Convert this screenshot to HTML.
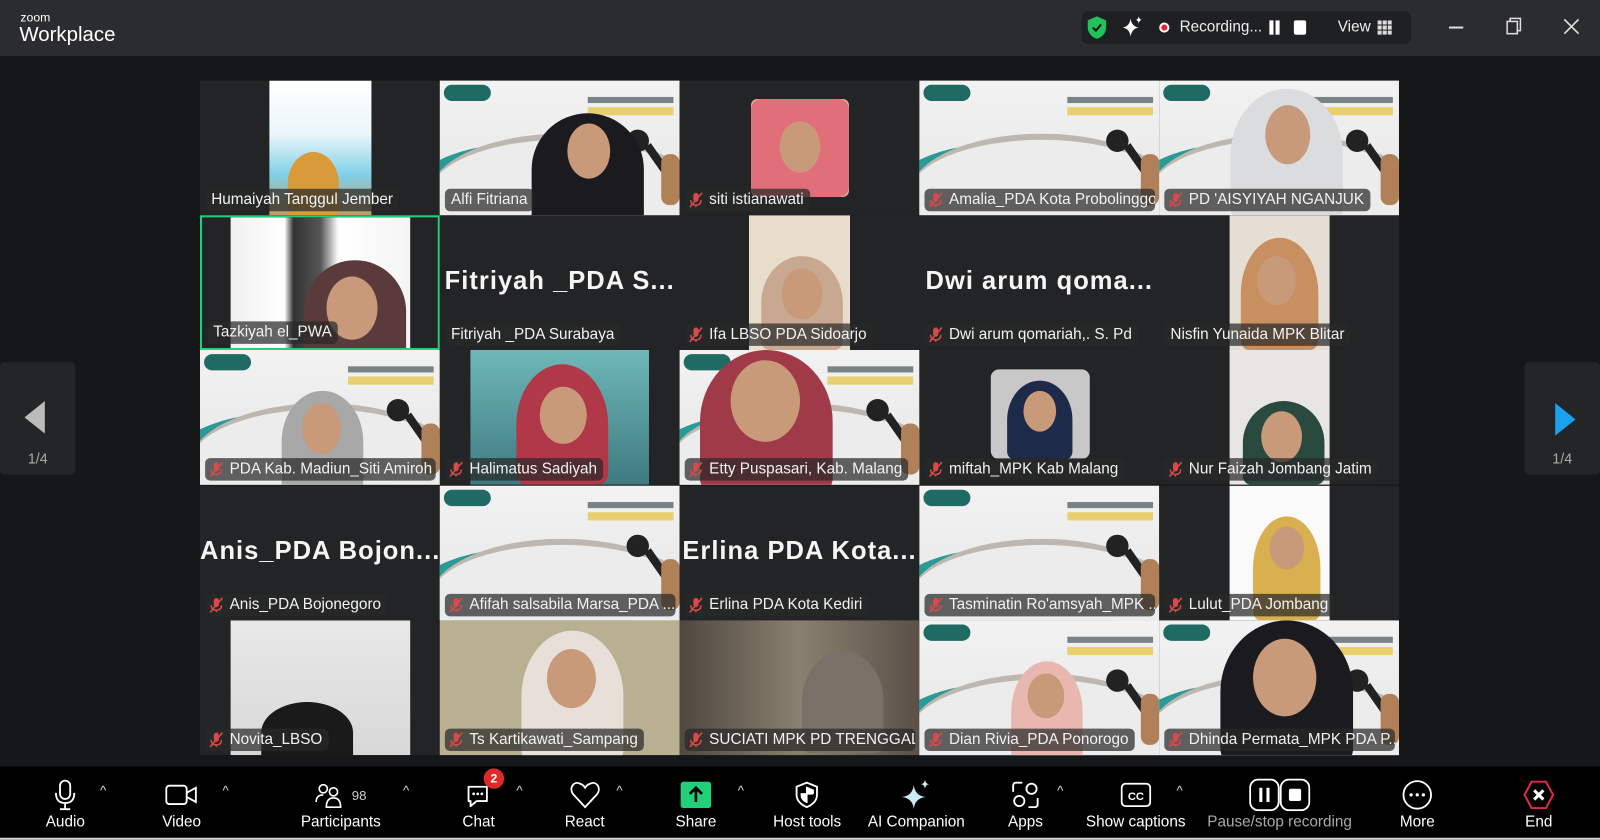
<!DOCTYPE html>
<html><head><meta charset="utf-8"><style>
*{margin:0;padding:0;box-sizing:border-box}
body{width:1600px;height:840px;background:#161718;font-family:"Liberation Sans",sans-serif;position:relative;overflow:hidden;color:#fff}
#w{position:absolute;left:0;top:0;width:1568px;height:823px;transform:scale(1.020408);transform-origin:0 0}
.top{position:absolute;left:0;top:0;width:1568px;height:55px;background:#2b2c2e}
.t{position:absolute;width:235px;height:132px;overflow:hidden;background:#232425}
.lbl{position:absolute;left:5px;bottom:4px;height:22px;background:rgba(40,40,40,.72);border-radius:5px;padding:0 6px 0 4px;font-size:15px;line-height:22px;color:#f2f2f2;white-space:nowrap;display:flex;align-items:center;max-width:226px;overflow:hidden}
.mic{width:14px;height:16px;margin-right:6px;flex:none}
.big{position:absolute;left:0;right:0;top:50px;text-align:center;font-weight:bold;font-size:25px;letter-spacing:1px;color:#f5f5f5;white-space:nowrap}
.ban{background:linear-gradient(180deg,#f2f2f2,#e6e6e6)}
.ban .teal{position:absolute;left:-40px;bottom:-60px;width:230px;height:130px;border-radius:50%;background:#2a9a96}
.ban .wh{position:absolute;left:-10px;bottom:-40px;width:260px;height:120px;border-radius:50%;background:#ececec;border-top:6px solid #bdb7b0}
.ban .logo{position:absolute;left:4px;top:4px;width:46px;height:16px;border-radius:8px;background:#1f6a63}
.ban .ttl{position:absolute;right:6px;top:16px;width:84px;height:6px;background:#2a3a40;opacity:.6}
.ban .ttl2{position:absolute;right:6px;top:26px;width:84px;height:8px;background:#e8d070}
.ban .mk{position:absolute;right:30px;top:48px;width:22px;height:22px;border-radius:50%;background:#222}
.ban .mh{position:absolute;right:16px;top:60px;width:8px;height:40px;background:#222;transform:rotate(-35deg)}
.ban .hand{position:absolute;right:0;top:72px;width:18px;height:50px;background:#b08058;border-radius:8px}
.vid{position:absolute;top:0;height:132px}
.side{position:absolute;top:355px;width:74px;height:110px;background:#242526;border-radius:4px;text-align:center;font-size:14px;color:#aaa}
.tb{position:absolute;left:0;top:751px;width:1568px;height:70px;background:#000}
.tbi{position:absolute;top:8px;text-align:center;font-size:15px;color:#fff;transform:translateX(-50%);white-space:nowrap}
.tbi .ic{height:40px;display:flex;align-items:center;justify-content:center}
.tbi .tx{margin-top:-2px}
.car{position:absolute;top:16px;font-size:13px;color:#ddd}
.hj{position:absolute;border-radius:50% 50% 10% 10%}
.face{position:absolute;border-radius:50%;background:#c89a7a}
</style></head><body><div id="w">
<div class="top">
<div style="position:absolute;left:20px;top:11px;font-size:12px;color:#fff;line-height:12px">zoom</div>
<div style="position:absolute;left:19px;top:23px;font-size:20px;color:#fff">Workplace</div>
<div style="position:absolute;left:1060px;top:11px;width:323px;height:32px;background:#1f2022;border-radius:6px"></div>
<svg style="position:absolute;left:1065px;top:15px" width="20" height="24"><path d="M10 1 L19 5 V12 C19 18 14 22 10 23 C6 22 1 18 1 12 V5 Z" fill="#22c25a"/><path d="M6 12 L9 15 L14 9" stroke="#111" stroke-width="2" fill="none"/></svg>
<svg style="position:absolute;left:1099px;top:15px" width="22" height="22"><path d="M9 3 Q10 11 17 12 Q10 13 9 21 Q8 13 1 12 Q8 11 9 3Z" fill="#fff"/><path d="M17 1 Q17.5 4 20 4.5 Q17.5 5 17 8 Q16.5 5 14 4.5 Q16.5 4 17 1Z" fill="#fff"/></svg>
<div style="position:absolute;left:1136px;top:22px;width:10px;height:10px;border-radius:50%;background:#e23;border:2px solid #fff"></div>
<div style="position:absolute;left:1156px;top:18px;font-size:15px;color:#eee">Recording...</div>
<div style="position:absolute;left:1244px;top:20px;width:4px;height:14px;background:#fff"></div><div style="position:absolute;left:1250px;top:20px;width:4px;height:14px;background:#fff"></div>
<div style="position:absolute;left:1268px;top:20px;width:12px;height:14px;background:#fff;border-radius:2px"></div>
<div style="position:absolute;left:1311px;top:18px;font-size:15px;color:#eee">View</div>
<svg style="position:absolute;left:1350px;top:20px" width="14" height="14"><g fill="#ddd"><rect x="0" y="0" width="4" height="4"/><rect x="5" y="0" width="4" height="4"/><rect x="10" y="0" width="4" height="4"/><rect x="0" y="5" width="4" height="4"/><rect x="5" y="5" width="4" height="4"/><rect x="10" y="5" width="4" height="4"/><rect x="0" y="10" width="4" height="4"/><rect x="5" y="10" width="4" height="4"/><rect x="10" y="10" width="4" height="4"/></g></svg>
<div style="position:absolute;left:1420px;top:26px;width:14px;height:1.5px;background:#ddd"></div>
<svg style="position:absolute;left:1476px;top:17px" width="16" height="18"><rect x="1" y="4" width="10" height="12" fill="none" stroke="#ddd" stroke-width="1.5"/><path d="M4 4 V1 H14 V13 H11" fill="none" stroke="#ddd" stroke-width="1.5"/></svg>
<svg style="position:absolute;left:1532px;top:18px" width="16" height="16"><path d="M1 1 L15 15 M15 1 L1 15" stroke="#ddd" stroke-width="1.6"/></svg>
</div>

<div class="side" style="left:0"><svg style="position:absolute;left:24px;top:38px" width="20" height="32"><path d="M20 0 V32 L0 16Z" fill="#bbb"/></svg><div style="position:absolute;left:0;right:0;top:86px">1/4</div></div>
<div class="side" style="left:1494px"><svg style="position:absolute;left:30px;top:40px" width="20" height="32"><path d="M0 0 V32 L20 16Z" fill="#19a1f0"/></svg><div style="position:absolute;left:0;right:0;top:86px">1/4</div></div>

<div class="t" style="left:196px;top:79px"><div class="vid" style="left:68px;width:100px;background:linear-gradient(180deg,#fff 0%,#eaf6fa 40%,#7fd0e8 70%,#c89a60 100%)"></div><div class="hj" style="left:86px;top:70px;width:50px;height:62px;background:#d99a3a"></div><div class="lbl" style="padding-left:6px">Humaiyah Tanggul Jember</div></div>
<div class="t ban" style="left:431px;top:79px"><div class="teal"></div><div class="wh"></div><div class="logo"></div><div class="ttl"></div><div class="ttl2"></div><div class="mk"></div><div class="mh"></div><div class="hand"></div><div class="hj" style="left:90px;top:32px;width:110px;height:110px;background:#1b1b1f"></div><div class="face" style="left:125px;top:42px;width:42px;height:54px"></div><div class="lbl" style="padding-left:6px">Alfi Fitriana</div></div>
<div class="t" style="left:666px;top:79px"><div class="vid" style="left:70px;width:96px;top:18px;height:96px;background:#d8b890;border-radius:6px"></div><div class="hj" style="left:70px;top:18px;width:96px;height:96px;background:#e06f7a;border-radius:10px"></div><div class="face" style="left:98px;top:40px;width:40px;height:50px"></div><div class="lbl">MIC siti istianawati</div></div>
<div class="t ban" style="left:901px;top:79px"><div class="teal"></div><div class="wh"></div><div class="logo"></div><div class="ttl"></div><div class="ttl2"></div><div class="mk"></div><div class="mh"></div><div class="hand"></div><div class="lbl">MIC Amalia_PDA Kota Probolinggo</div></div>
<div class="t ban" style="left:1136px;top:79px"><div class="teal"></div><div class="wh"></div><div class="logo"></div><div class="ttl"></div><div class="ttl2"></div><div class="mk"></div><div class="mh"></div><div class="hand"></div><div class="hj" style="left:70px;top:8px;width:110px;height:130px;background:#dadcde"></div><div class="face" style="left:104px;top:24px;width:44px;height:58px"></div><div class="lbl">MIC PD 'AISYIYAH NGANJUK</div></div>

<div class="t" style="left:196px;top:211px;border:2px solid #22d07a"><div class="vid" style="left:28px;width:176px;background:linear-gradient(90deg,#f0f0f0,#fff 30%,#333 35%,#555 50%,#fff 60%,#f4f4f4)"></div><div class="hj" style="left:100px;top:42px;width:100px;height:100px;background:#5a3a3a"></div><div class="face" style="left:122px;top:58px;width:50px;height:62px"></div><div class="lbl" style="padding-left:6px">Tazkiyah el_PWA</div></div>
<div class="t" style="left:431px;top:211px"><div class="big">Fitriyah _PDA S...</div><div class="lbl" style="padding-left:6px">Fitriyah _PDA Surabaya</div></div>
<div class="t" style="left:666px;top:211px"><div class="vid" style="left:68px;width:99px;background:#e8dccb"></div><div class="hj" style="left:80px;top:40px;width:80px;height:92px;background:#c8a890"></div><div class="face" style="left:100px;top:52px;width:40px;height:50px"></div><div class="lbl">MIC Ifa LBSO PDA Sidoarjo</div></div>
<div class="t" style="left:901px;top:211px"><div class="big">Dwi arum qoma...</div><div class="lbl">MIC Dwi arum qomariah,. S. Pd</div></div>
<div class="t" style="left:1136px;top:211px"><div class="vid" style="left:69px;width:98px;background:#e4ded4"></div><div class="hj" style="left:80px;top:22px;width:76px;height:110px;background:#c89060"></div><div class="face" style="left:96px;top:40px;width:38px;height:48px"></div><div class="lbl" style="padding-left:6px">Nisfin Yunaida MPK Blitar</div></div>

<div class="t ban" style="left:196px;top:343px"><div class="teal"></div><div class="wh"></div><div class="logo"></div><div class="ttl"></div><div class="ttl2"></div><div class="mk"></div><div class="mh"></div><div class="hand"></div><div class="hj" style="left:80px;top:40px;width:80px;height:100px;background:#a8a8a8"></div><div class="face" style="left:100px;top:52px;width:38px;height:50px"></div><div class="lbl">MIC PDA Kab. Madiun_Siti Amiroh</div></div>
<div class="t" style="left:431px;top:343px"><div class="vid" style="left:30px;width:175px;background:linear-gradient(180deg,#6fb8b8,#3e7a80)"></div><div class="hj" style="left:75px;top:14px;width:90px;height:118px;background:#b03848"></div><div class="face" style="left:98px;top:36px;width:46px;height:56px"></div><div class="lbl">MIC Halimatus Sadiyah</div></div>
<div class="t ban" style="left:666px;top:343px"><div class="teal"></div><div class="wh"></div><div class="logo"></div><div class="ttl"></div><div class="ttl2"></div><div class="mk"></div><div class="mh"></div><div class="hand"></div><div class="hj" style="left:20px;top:0;width:130px;height:140px;background:#a03a48"></div><div class="face" style="left:50px;top:10px;width:68px;height:80px"></div><div class="lbl">MIC Etty Puspasari, Kab. Malang</div></div>
<div class="t" style="left:901px;top:343px"><div class="vid" style="left:70px;width:97px;top:19px;height:88px;background:#c8c8c8;border-radius:8px"></div><div class="hj" style="left:86px;top:30px;width:64px;height:77px;background:#1e2a4a"></div><div class="face" style="left:102px;top:40px;width:32px;height:40px"></div><div class="lbl">MIC miftah_MPK Kab Malang</div></div>
<div class="t" style="left:1136px;top:343px"><div class="vid" style="left:69px;width:98px;background:#e8e6e2"></div><div class="hj" style="left:82px;top:50px;width:80px;height:82px;background:#2a4a40"></div><div class="face" style="left:100px;top:60px;width:40px;height:50px"></div><div class="lbl">MIC Nur Faizah  Jombang Jatim</div></div>

<div class="t" style="left:196px;top:476px"><div class="big">Anis_PDA Bojon...</div><div class="lbl">MIC Anis_PDA Bojonegoro</div></div>
<div class="t ban" style="left:431px;top:476px"><div class="teal"></div><div class="wh"></div><div class="logo"></div><div class="ttl"></div><div class="ttl2"></div><div class="mk"></div><div class="mh"></div><div class="hand"></div><div class="lbl">MIC Afifah salsabila Marsa_PDA ...</div></div>
<div class="t" style="left:666px;top:476px"><div class="big">Erlina PDA Kota...</div><div class="lbl">MIC Erlina PDA Kota Kediri</div></div>
<div class="t ban" style="left:901px;top:476px"><div class="teal"></div><div class="wh"></div><div class="logo"></div><div class="ttl"></div><div class="ttl2"></div><div class="mk"></div><div class="mh"></div><div class="hand"></div><div class="lbl">MIC Tasminatin Ro'amsyah_MPK ...</div></div>
<div class="t" style="left:1136px;top:476px"><div class="vid" style="left:69px;width:98px;background:#fafafa"></div><div class="hj" style="left:92px;top:30px;width:66px;height:102px;background:#d8b050"></div><div class="face" style="left:108px;top:40px;width:34px;height:42px"></div><div class="lbl">MIC Lulut_PDA Jombang</div></div>

<div class="t" style="left:196px;top:608px"><div class="vid" style="left:30px;width:176px;background:linear-gradient(180deg,#e8e8e8,#d8d8d8)"></div><div class="hj" style="left:60px;top:80px;width:90px;height:60px;background:#1a1a1a"></div><div class="lbl">MIC Novita_LBSO</div></div>
<div class="t" style="left:431px;top:608px;background:#b8b090"><div class="hj" style="left:80px;top:10px;width:100px;height:130px;background:#e8e0d8"></div><div class="face" style="left:105px;top:28px;width:48px;height:58px"></div><div class="lbl">MIC Ts Kartikawati_Sampang</div></div>
<div class="t" style="left:666px;top:608px;background:linear-gradient(90deg,#504840,#8a8070 50%,#5a5048)"><div class="hj" style="left:120px;top:30px;width:80px;height:100px;background:#7a7068"></div><div class="lbl">MIC SUCIATI MPK PD TRENGGAL...</div></div>
<div class="t ban" style="left:901px;top:608px"><div class="teal"></div><div class="wh"></div><div class="logo"></div><div class="ttl"></div><div class="ttl2"></div><div class="mk"></div><div class="mh"></div><div class="hand"></div><div class="hj" style="left:90px;top:40px;width:70px;height:100px;background:#e8b8b0"></div><div class="face" style="left:106px;top:52px;width:36px;height:44px"></div><div class="lbl">MIC Dian Rivia_PDA Ponorogo</div></div>
<div class="t ban" style="left:1136px;top:608px"><div class="teal"></div><div class="wh"></div><div class="logo"></div><div class="ttl"></div><div class="ttl2"></div><div class="mk"></div><div class="mh"></div><div class="hand"></div><div class="hj" style="left:60px;top:0;width:130px;height:140px;background:#1b1b1f"></div><div class="face" style="left:92px;top:18px;width:62px;height:76px"></div><div class="lbl">MIC Dhinda Permata_MPK PDA P...</div></div>

<div class="tb">
<div class="tbi" style="left:64px"><div class="ic"><svg width="24" height="32"><rect x="7" y="2" width="10" height="18" rx="5" fill="none" stroke="#fff" stroke-width="1.8"/><path d="M3 14 Q3 24 12 24 Q21 24 21 14 M12 24 V30 M7 30 H17" fill="none" stroke="#fff" stroke-width="1.8"/></svg></div><div class="tx">Audio</div></div>
<div class="car" style="left:98px">^</div>
<div class="tbi" style="left:178px"><div class="ic"><svg width="32" height="22"><rect x="1" y="2" width="20" height="18" rx="3" fill="none" stroke="#fff" stroke-width="1.8"/><path d="M21 9 L30 4 V18 L21 13" fill="none" stroke="#fff" stroke-width="1.8"/></svg></div><div class="tx">Video</div></div>
<div class="car" style="left:218px">^</div>
<div class="tbi" style="left:334px"><div class="ic"><svg width="26" height="26"><circle cx="8" cy="7" r="4" fill="none" stroke="#fff" stroke-width="1.6"/><circle cx="18" cy="10" r="4" fill="none" stroke="#fff" stroke-width="1.6"/><path d="M1 20 Q1 13 8 13 M11 25 Q11 16 18 16 Q25 16 25 25Z" fill="none" stroke="#fff" stroke-width="1.6"/></svg><span style="font-size:13px;color:#ccc;margin-left:10px">98</span></div><div class="tx">Participants</div></div>
<div class="car" style="left:395px">^</div>
<div class="tbi" style="left:469px"><div class="ic"><svg width="28" height="28"><path d="M4 6 H22 V20 H12 L6 25 V20 H4Z" fill="none" stroke="#fff" stroke-width="1.8" stroke-linejoin="round"/><circle cx="9" cy="13" r="1.3" fill="#fff"/><circle cx="13" cy="13" r="1.3" fill="#fff"/><circle cx="17" cy="13" r="1.3" fill="#fff"/></svg></div><div class="tx">Chat</div></div>
<div style="position:absolute;left:474px;top:2px;width:20px;height:20px;border-radius:50%;background:#e02a2a;color:#fff;font-size:12px;font-weight:bold;text-align:center;line-height:20px">2</div>
<div class="car" style="left:506px">^</div>
<div class="tbi" style="left:573px"><div class="ic"><svg width="30" height="28"><path d="M15 26 L3 13 C-1 7 4 0 10 3 Q13 4 15 7 Q17 4 20 3 C26 0 31 7 27 13Z" fill="none" stroke="#fff" stroke-width="1.8"/></svg></div><div class="tx">React</div></div>
<div class="car" style="left:604px">^</div>
<div class="tbi" style="left:682px"><div class="ic"><svg width="30" height="26"><rect x="0" y="0" width="30" height="26" rx="3" fill="#22d07a"/><path d="M15 20 V7 M9 12 L15 6 L21 12" stroke="#000" stroke-width="2.6" fill="none"/></svg></div><div class="tx">Share</div></div>
<div class="car" style="left:723px">^</div>
<div class="tbi" style="left:791px"><div class="ic"><svg width="24" height="28"><path d="M12 2 L22 6 V14 C22 20 17 24 12 26 C7 24 2 20 2 14 V6Z" fill="none" stroke="#fff" stroke-width="1.8"/><path d="M12 6 V22 M6 13 H18" stroke="#fff" stroke-width="1.5"/><path d="M12 6 L19 9 V13 H12Z M12 13 H6 V15 C6 18 9 21 12 22Z" fill="#fff"/></svg></div><div class="tx">Host tools</div></div>
<div class="tbi" style="left:898px"><div class="ic"><svg width="30" height="30"><path d="M12 5 Q13 16 24 17 Q13 18 12 29 Q11 18 0 17 Q11 16 12 5Z" fill="#c9ecf7"/><path d="M23 0 Q23.6 4 27 4.5 Q23.6 5 23 9 Q22.4 5 19 4.5 Q22.4 4 23 0Z" fill="#c9ecf7"/></svg></div><div class="tx">AI Companion</div></div>
<div class="tbi" style="left:1005px"><div class="ic"><svg width="28" height="28"><path d="M2 11 V5 Q2 2 5 2 H11 M26 17 V23 Q26 26 23 26 H17" fill="none" stroke="#fff" stroke-width="1.8"/><circle cx="20" cy="8" r="5" fill="none" stroke="#fff" stroke-width="1.8"/><circle cx="8" cy="20" r="5" fill="none" stroke="#fff" stroke-width="1.8"/></svg></div><div class="tx">Apps</div></div>
<div class="car" style="left:1036px">^</div>
<div class="tbi" style="left:1113px"><div class="ic"><svg width="30" height="24"><rect x="1" y="1" width="28" height="22" rx="4" fill="none" stroke="#fff" stroke-width="1.8"/><text x="15" y="17" text-anchor="middle" font-family="Liberation Sans" font-size="11" font-weight="bold" fill="#fff">CC</text></svg></div><div class="tx">Show captions</div></div>
<div class="car" style="left:1153px">^</div>
<div class="tbi" style="left:1254px;color:#aaa"><div class="ic"><svg width="60" height="32"><rect x="1" y="1" width="28" height="30" rx="8" fill="none" stroke="#fff" stroke-width="1.8"/><rect x="10" y="9" width="3" height="14" fill="#fff"/><rect x="17" y="9" width="3" height="14" fill="#fff"/><rect x="31" y="1" width="28" height="30" rx="8" fill="none" stroke="#fff" stroke-width="1.8"/><rect x="39" y="10" width="12" height="12" rx="2" fill="#fff"/></svg></div><div class="tx">Pause/stop recording</div></div>
<div class="tbi" style="left:1389px"><div class="ic"><svg width="30" height="30"><circle cx="15" cy="15" r="13.5" fill="none" stroke="#fff" stroke-width="1.8"/><circle cx="9" cy="15" r="1.6" fill="#fff"/><circle cx="15" cy="15" r="1.6" fill="#fff"/><circle cx="21" cy="15" r="1.6" fill="#fff"/></svg></div><div class="tx">More</div></div>
<div class="tbi" style="left:1508px"><div class="ic"><svg width="30" height="28"><path d="M8 1 H22 L29 14 L22 27 H8 L1 14Z" fill="none" stroke="#e0284a" stroke-width="2"/><path d="M10.5 9.5 L19.5 18.5 M19.5 9.5 L10.5 18.5" stroke="#fff" stroke-width="3"/></svg></div><div class="tx">End</div></div>
</div>
<div style="position:absolute;left:0;top:821px;width:1568px;height:2px;background:#d8d8d8"></div>
</div>
<script>
document.querySelectorAll('.lbl').forEach(function(l){
 if(l.firstChild && l.firstChild.nodeType===3 && l.firstChild.nodeValue.indexOf('MIC ')===0){
  l.firstChild.nodeValue=l.firstChild.nodeValue.slice(4);
  var s=document.createElementNS('http://www.w3.org/2000/svg','svg');
  s.setAttribute('class','mic');s.setAttribute('viewBox','0 0 14 16');
  s.innerHTML='<rect x="4.5" y="1" width="5" height="9" rx="2.5" fill="#d84a4a"/><path d="M2 8 Q2 13 7 13 Q12 13 12 8 M7 13 V15" stroke="#d84a4a" stroke-width="1.4" fill="none"/><path d="M1 15 L13 1" stroke="#d84a4a" stroke-width="1.6"/>';
  l.insertBefore(s,l.firstChild);
 }
});
</script>
</body></html>
